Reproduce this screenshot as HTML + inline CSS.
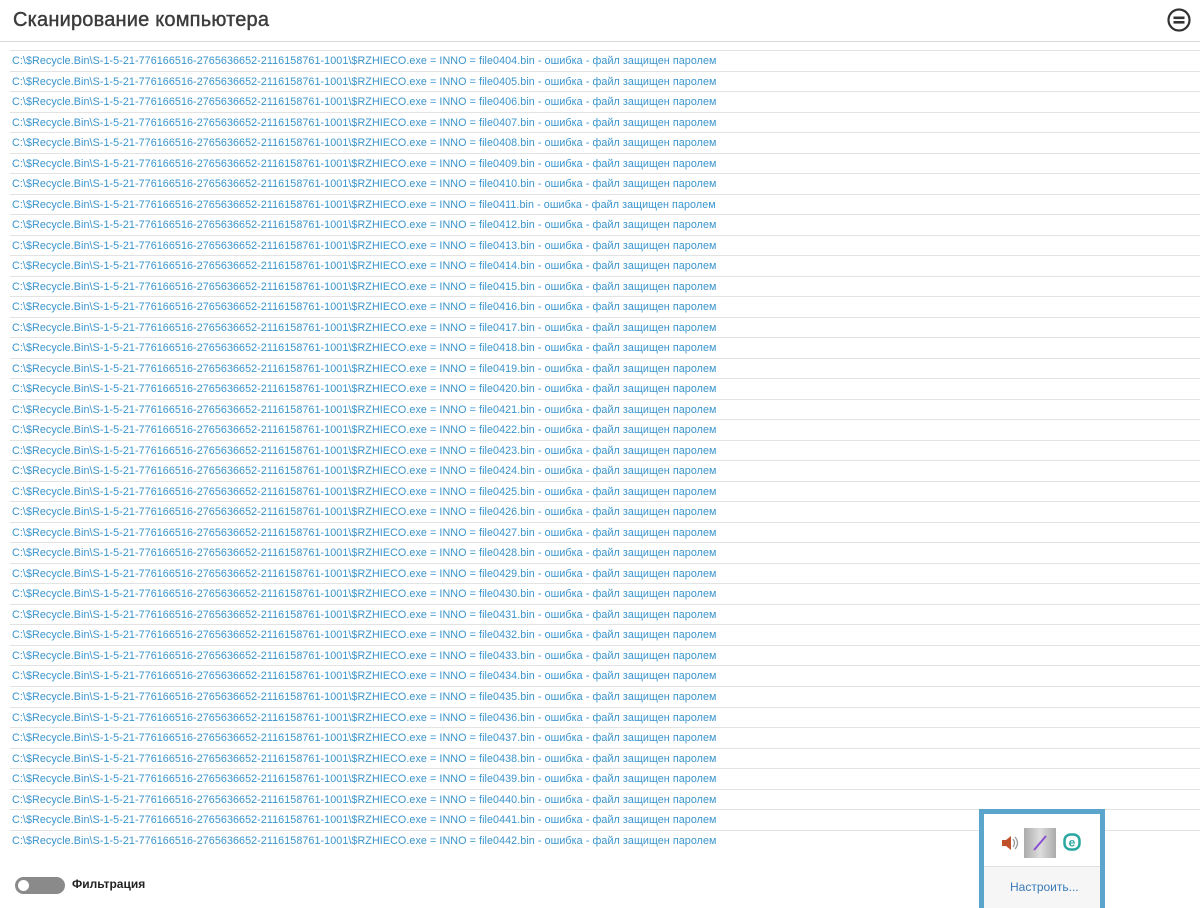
<!DOCTYPE html>
<html><head><meta charset="utf-8"><style>
body{margin:0;width:1200px;height:903px;overflow:hidden;background:#fff;font-family:"Liberation Sans","DejaVu Sans",sans-serif;position:relative}
.title{position:absolute;left:13px;top:9px;font-size:20px;color:#3c3c3c;-webkit-text-stroke:0.4px #3c3c3c;letter-spacing:0.2px}
.hl{position:absolute;left:0;right:0;top:41px;border-top:1px solid #d8d8d8}
.rows{position:absolute;left:10px;right:0;top:50px}
.row{height:19.53px;border-top:1px solid #e3e3e3;font-size:10.75px;letter-spacing:0.07px;color:#3a94cc;padding-left:2px;line-height:20px;white-space:nowrap}
.tog{position:absolute;left:15px;top:877px;width:50px;height:17px;border-radius:9px;background:#8a8a8a}
.tog:after{content:"";position:absolute;left:3px;top:3px;width:11px;height:11px;border-radius:50%;background:#fff}
.flabel{position:absolute;left:72px;top:877px;font-size:12px;font-weight:bold;color:#222}
.pop{position:absolute;left:979px;top:809px;width:116px;height:94px;border:5px solid #5ba5cc;border-bottom:none;background:#fff}
.pop .low{position:absolute;left:0;right:0;top:52px;bottom:0;background:#f6f6f6;border-top:1px solid #e0e0e0}
.pop .cfg{position:absolute;left:26px;top:66px;font-size:12px;color:#3a7ab8}
</style></head><body>
<div class="title">Сканирование компьютера</div>
<svg style="position:absolute;left:1166px;top:7px" width="26" height="26" viewBox="0 0 26 26"><circle cx="13" cy="13" r="10.5" fill="none" stroke="#333" stroke-width="2.2"/><rect x="7.5" y="9.5" width="11" height="2.6" fill="#333"/><rect x="7.5" y="14" width="11" height="2.6" fill="#333"/></svg>
<div class="hl"></div>
<div class="rows" id="r"></div>
<div class="tog"></div>
<div class="flabel">Фильтрация</div>
<div class="pop">
<svg style="position:absolute;left:16px;top:20px" width="20" height="18" viewBox="0 0 20 18"><path d="M2 6h4l5-4v14l-5-4H2z" fill="#c0502a"/><path d="M13 5q3 4 0 8M15 3q5 6 0 12" stroke="#999" fill="none" stroke-width="1.3"/></svg>
<div style="position:absolute;left:40px;top:14px;width:32px;height:30px;background:linear-gradient(90deg,#aaa,#ddd 50%,#aaa)"></div>
<svg style="position:absolute;left:40px;top:14px" width="32" height="30"><path d="M10 22L22 8" stroke="#8a4fd0" stroke-width="2"/></svg>
<svg style="position:absolute;left:79px;top:19px" width="18" height="18"><rect x="1.5" y="1.5" width="15" height="15" rx="6" fill="none" stroke="#2aa8a0" stroke-width="2.5"/><text x="9" y="13.5" text-anchor="middle" font-size="12" font-weight="bold" fill="#2aa8a0" font-family="Liberation Sans">e</text></svg>
<div class="low"></div>
<div class="cfg">Настроить...</div>
</div>
<script>
var h='';for(var i=404;i<=442;i++){h+='<div class="row">C:\\$Recycle.Bin\\S-1-5-21-776166516-2765636652-2116158761-1001\\$RZHIECO.exe = INNO = file0'+i+'.bin - ошибка - файл защищен паролем</div>';}
document.getElementById('r').innerHTML=h;
</script>
</body></html>
